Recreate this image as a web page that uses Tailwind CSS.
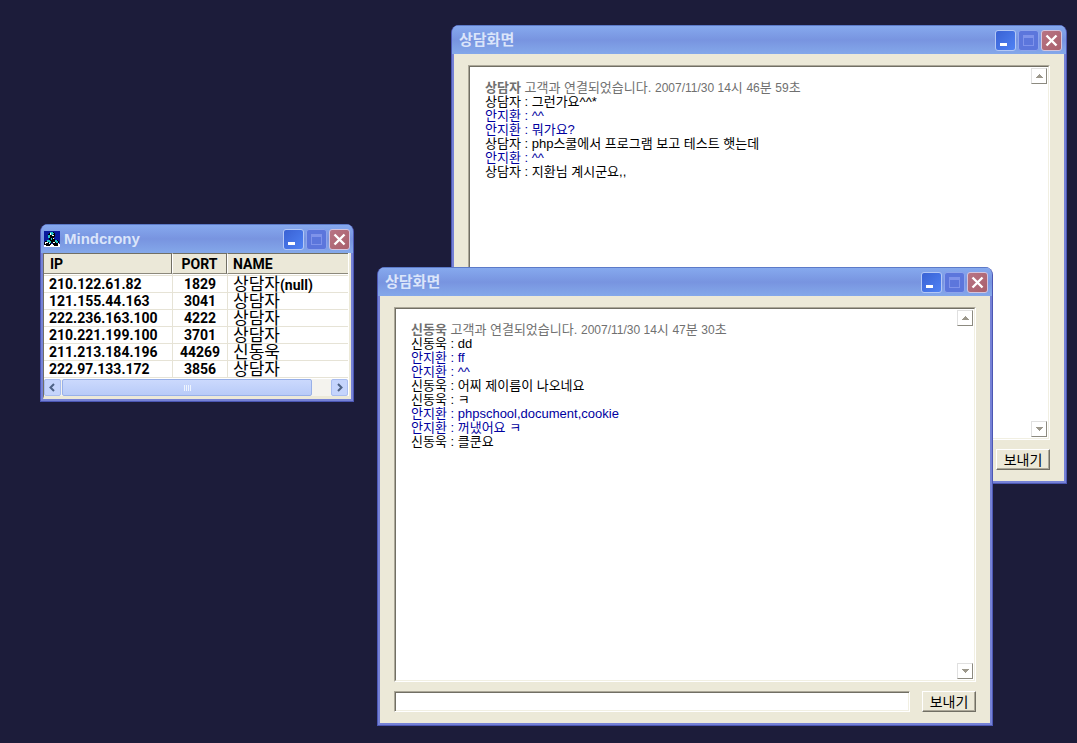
<!DOCTYPE html>
<html lang="ko">
<head>
<meta charset="utf-8">
<title>상담화면</title>
<script src="https://cdn.jsdelivr.net/npm/@tailwindcss/browser@4"></script>
</head>
<body class="relative min-h-screen overflow-hidden bg-[#1c1c3a] font-['Liberation_Sans','Noto_Sans_CJK_KR',sans-serif] text-[13px] text-black">

<svg class="hidden" aria-hidden="true">
  <symbol id="min" viewBox="0 0 19 19"><rect x="4" y="12" width="7" height="3" fill="#fff"/></symbol>
  <symbol id="max" viewBox="0 0 19 19"><path d="M4 4h11v11H4zM5 7v7h9V7z" fill="#7f93ea" fill-rule="evenodd"/></symbol>
  <symbol id="close" viewBox="0 0 19 19"><path d="M4.500 4.500l10 10M14.500 4.500l-10 10" stroke="#fff" stroke-width="2.400" fill="none"/></symbol>
  <symbol id="up" viewBox="0 0 7 4"><path d="M3 0h1v1h1v1h1v1h1v1H0V3h1V2h1V1h1z" fill="#9c988c"/></symbol>
  <symbol id="down" viewBox="0 0 7 4"><path d="M0 0h7v1H6v1H5v1H4v1H3V3H2V2H1V1H0z" fill="#9c988c"/></symbol>
</svg>

<!-- Chat window, back -->
<section class="absolute left-[451px] top-[25px] flex h-[459px] w-[616px] flex-col overflow-hidden rounded-t-lg border-x border-b border-[#4c57b4] bg-[#7682d6]">
  <header class="flex h-[29px] shrink-0 items-center gap-[2px] border-t border-[#5c7ac8] bg-linear-to-b from-[#86a9ee] via-[#7894e0] to-[#84a8ea] pl-[7px] pr-1">
    <h2 class="grow text-[15px] font-bold leading-5 text-[#dbe5fa]">상담화면</h2>
    <button aria-label="최소화" class="size-[21px] rounded-[3px] border border-[#b4c8f6] bg-linear-to-br from-[#3a62d4] to-[#4f82f4]"><svg class="size-[19px]"><use href="#min"/></svg></button>
    <button aria-label="최대화" disabled class="size-[21px] rounded-[3px] border border-[#8da4ec] bg-[#5c76dc]"><svg class="size-[19px]"><use href="#max"/></svg></button>
    <button aria-label="닫기" class="size-[21px] rounded-[3px] border border-[#d3c4dd] bg-linear-to-br from-[#b87484] to-[#a9606c]"><svg class="size-[19px]"><use href="#close"/></svg></button>
  </header>
  <div class="mx-[2px] mb-[2px] flex min-h-0 grow flex-col gap-[9px] bg-[#ece9d8] px-[14px] pb-[11px] pt-[11px]">
    <div class="flex min-h-0 grow border border-b-white border-l-[#aca899] border-r-white border-t-[#aca899]">
      <div class="flex min-w-0 grow border border-b-[#f1efe2] border-l-[#716f64] border-r-[#f1efe2] border-t-[#716f64] bg-white">
        <div class="grow pl-[15px] pt-[14px] leading-[14px] *:h-[14px] *:whitespace-nowrap">
          <p class="text-[#707070]"><b>상담자</b> 고객과 연결되었습니다. <span class="text-xs leading-[14px]">2007/11/30 14</span>시 <span class="text-xs leading-[14px]">46</span>분 <span class="text-xs leading-[14px]">59</span>초</p>
          <p>상담자 : 그런가요^^*</p>
          <p class="text-[#0000a0]">안지환 : ^^</p>
          <p class="text-[#0000a0]">안지환 : 뭐가요?</p>
          <p>상담자 : php스쿨에서 프로그램 보고 테스트 햇는데</p>
          <p class="text-[#0000a0]">안지환 : ^^</p>
          <p>상담자 : 지환님 계시군요,,</p>
        </div>
        <div class="flex flex-col justify-between p-px">
          <button aria-label="위로" class="flex size-4 items-center justify-center border border-b-[#8c8a80] border-l-[#e0e0e0] border-r-[#8c8a80] border-t-[#e0e0e0]"><svg class="h-1 w-[7px]"><use href="#up"/></svg></button>
          <button aria-label="아래로" class="flex size-4 items-center justify-center border border-b-[#8c8a80] border-l-[#e0e0e0] border-r-[#8c8a80] border-t-[#e0e0e0]"><svg class="h-1 w-[7px]"><use href="#down"/></svg></button>
        </div>
      </div>
    </div>
    <form class="flex h-[21px] shrink-0 gap-3">
      <input type="text" aria-label="메시지" class="min-w-0 grow border border-b-white border-l-[#aca899] border-r-white border-t-[#aca899] bg-white px-1 shadow-[inset_1px_1px_0_#716f64,inset_-1px_-1px_0_#f1efe2]">
      <button type="button" class="w-[54px] border border-b-[#716f64] border-l-white border-r-[#716f64] border-t-white bg-[#ece9d8] text-sm leading-[18px] shadow-[inset_-1px_-1px_0_#aca899]">보내기</button>
    </form>
  </div>
</section>

<!-- Connection list -->
<section class="absolute left-[40px] top-[224px] flex h-[178px] w-[314px] flex-col overflow-hidden rounded-t-lg border-x border-b border-[#4c57b4] bg-[#7682d6]">
  <header class="flex h-[29px] shrink-0 items-center gap-[2px] border-t border-[#5c7ac8] bg-linear-to-b from-[#86a9ee] via-[#7894e0] to-[#84a8ea] pl-[3px] pr-[3px]">
    <svg class="size-4 shrink-0" viewBox="0 0 16 16" shape-rendering="crispEdges" aria-hidden="true">
      <path d="M0 0h16v16H0z" fill="#0a1a9c"/>
      <path d="M0 13h1v1h5v-1h3v1h5v-1h2v3H0z" fill="#fff"/>
      <path d="M6 1h4v1h1v4h-1v2h1v1h3v1h1v3h-1v2h-4v-1H9v-2H7v2H6v1H2v-1H0v-3h1v-1h2V9h2V7H4V3h1V2h1z" fill="#000"/>
      <path d="M6 1h3v1h1v1H9v2H8V4H6zM4 4h2v3H4zM3 9h3v1h1v2H5v-1H3zM11 9h2v1h1v2h-2v-1h-1zM7 7h1v2H7z" fill="#22c4c8"/>
      <path d="M6 2h1v2H6zM8 4h2v1H8zM1 11h3v1H2v1H1zM9 11h2v1H9zM9 7h1v1H9zM14 12h1v1h-1zM5 12h1v1H5z" fill="#fff"/>
    </svg>
    <h2 class="grow pl-[2px] text-[15px] font-bold leading-5 text-[#dbe5fa]">Mindcrony</h2>
    <button aria-label="최소화" class="size-[21px] rounded-[3px] border border-[#b4c8f6] bg-linear-to-br from-[#3a62d4] to-[#4f82f4]"><svg class="size-[19px]"><use href="#min"/></svg></button>
    <button aria-label="최대화" disabled class="size-[21px] rounded-[3px] border border-[#8da4ec] bg-[#5c76dc]"><svg class="size-[19px]"><use href="#max"/></svg></button>
    <button aria-label="닫기" class="size-[21px] rounded-[3px] border border-[#d3c4dd] bg-linear-to-br from-[#b87484] to-[#a9606c]"><svg class="size-[19px]"><use href="#close"/></svg></button>
  </header>
  <div class="mx-[2px] mb-[2px] flex min-h-0 grow flex-col border-b-[3px] border-l border-r-2 border-b-[#ece9d8] border-l-[#716f64] border-r-[#ece9d8] bg-white pr-[1px]">
    <table class="w-full table-fixed border-separate border-spacing-0 text-left font-[Roboto,'Noto_Sans_CJK_KR',sans-serif] text-sm font-bold leading-[14px]">
      <colgroup><col class="w-[128px]"><col class="w-[55px]"><col></colgroup>
      <thead>
        <tr class="h-[21px] *:border-b *:border-t *:border-b-[#8c897c] *:border-t-[#716f64] *:bg-[#ebe8d8] *:p-0">
          <th class="border-r border-r-[#716f64] pl-0"><span class="pl-[6px]">IP</span></th>
          <th class="border-l border-r border-l-white border-r-[#716f64] text-center">PORT</th>
          <th class="border-l border-l-white"><span class="pl-[5px]">NAME</span></th>
        </tr>
      </thead>
      <tbody class="*:h-[17px] [&_td]:border-b [&_td]:border-[#e6e3d6] [&_td]:p-0 [&_td+td]:border-l">
        <tr class="h-[2px]! leading-[1px]"><td></td><td></td><td></td></tr>
        <tr><td><span class="pl-[5px]">210.122.61.82</span></td><td class="text-center">1829</td><td><span class="pl-[5px] text-[17px] font-normal leading-[14px]">상담자</span>(null)</td></tr>
        <tr><td><span class="pl-[5px]">121.155.44.163</span></td><td class="text-center">3041</td><td><span class="pl-[5px] text-[17px] font-normal leading-[14px]">상담자</span></td></tr>
        <tr><td><span class="pl-[5px]">222.236.163.100</span></td><td class="text-center">4222</td><td><span class="pl-[5px] text-[17px] font-normal leading-[14px]">상담자</span></td></tr>
        <tr><td><span class="pl-[5px]">210.221.199.100</span></td><td class="text-center">3701</td><td><span class="pl-[5px] text-[17px] font-normal leading-[14px]">상담자</span></td></tr>
        <tr><td><span class="pl-[5px]">211.213.184.196</span></td><td class="text-center">44269</td><td><span class="pl-[5px] text-[17px] font-normal leading-[14px]">신동욱</span></td></tr>
        <tr><td><span class="pl-[5px]">222.97.133.172</span></td><td class="text-center">3856</td><td><span class="pl-[5px] text-[17px] font-normal leading-[14px]">상담자</span></td></tr>
      </tbody>
    </table>
    <div class="mt-auto flex h-[17px] shrink-0 gap-[1px] bg-[#f4f3ee]">
      <button aria-label="왼쪽" class="flex w-[17px] items-center justify-center rounded-[2px] border border-[#a9bdf0] bg-[#c5d4fc]"><svg class="size-[9px]" viewBox="0 0 9 9"><path d="M6 1L2.500 4.500 6 8" stroke="#4d6185" stroke-width="2" fill="none"/></svg></button>
      <div class="flex w-[250px] items-center justify-center gap-[1px] rounded-[2px] border border-[#98b0e8] bg-linear-to-b from-[#cbd9fd] to-[#b8cbf8] *:h-[6px] *:w-px *:bg-[#eef4fe]"><i></i><i></i><i></i><i></i></div>
      <div class="grow"></div>
      <button aria-label="오른쪽" class="flex w-[17px] items-center justify-center rounded-[2px] border border-[#a9bdf0] bg-[#c5d4fc]"><svg class="size-[9px]" viewBox="0 0 9 9"><path d="M3 1l3.500 3.500L3 8" stroke="#4d6185" stroke-width="2" fill="none"/></svg></button>
    </div>
  </div>
</section>

<!-- Chat window, front -->
<section class="absolute left-[377px] top-[267px] flex h-[459px] w-[616px] flex-col overflow-hidden rounded-t-lg border-x border-b border-[#4c57b4] bg-[#7682d6]">
  <header class="flex h-[29px] shrink-0 items-center gap-[2px] border-t border-[#5c7ac8] bg-linear-to-b from-[#86a9ee] via-[#7894e0] to-[#84a8ea] pl-[7px] pr-1">
    <h2 class="grow text-[15px] font-bold leading-5 text-[#dbe5fa]">상담화면</h2>
    <button aria-label="최소화" class="size-[21px] rounded-[3px] border border-[#b4c8f6] bg-linear-to-br from-[#3a62d4] to-[#4f82f4]"><svg class="size-[19px]"><use href="#min"/></svg></button>
    <button aria-label="최대화" disabled class="size-[21px] rounded-[3px] border border-[#8da4ec] bg-[#5c76dc]"><svg class="size-[19px]"><use href="#max"/></svg></button>
    <button aria-label="닫기" class="size-[21px] rounded-[3px] border border-[#d3c4dd] bg-linear-to-br from-[#b87484] to-[#a9606c]"><svg class="size-[19px]"><use href="#close"/></svg></button>
  </header>
  <div class="mx-[2px] mb-[2px] flex min-h-0 grow flex-col gap-[9px] bg-[#ece9d8] px-[14px] pb-[11px] pt-[11px]">
    <div class="flex min-h-0 grow border border-b-white border-l-[#aca899] border-r-white border-t-[#aca899]">
      <div class="flex min-w-0 grow border border-b-[#f1efe2] border-l-[#716f64] border-r-[#f1efe2] border-t-[#716f64] bg-white">
        <div class="grow pl-[15px] pt-[14px] leading-[14px] *:h-[14px] *:whitespace-nowrap">
          <p class="text-[#707070]"><b>신동욱</b> 고객과 연결되었습니다. <span class="text-xs leading-[14px]">2007/11/30 14</span>시 <span class="text-xs leading-[14px]">47</span>분 <span class="text-xs leading-[14px]">30</span>초</p>
          <p>신동욱 : dd</p>
          <p class="text-[#0000a0]">안지환 : ff</p>
          <p class="text-[#0000a0]">안지환 : ^^</p>
          <p>신동욱 : 어찌 제이름이 나오네요</p>
          <p>신동욱 : ㅋ</p>
          <p class="text-[#0000a0]">안지환 : phpschool,document,cookie</p>
          <p class="text-[#0000a0]">안지환 : 꺼냈어요 ㅋ</p>
          <p>신동욱 : 클쿤요</p>
        </div>
        <div class="flex flex-col justify-between p-px">
          <button aria-label="위로" class="flex size-4 items-center justify-center border border-b-[#8c8a80] border-l-[#e0e0e0] border-r-[#8c8a80] border-t-[#e0e0e0]"><svg class="h-1 w-[7px]"><use href="#up"/></svg></button>
          <button aria-label="아래로" class="flex size-4 items-center justify-center border border-b-[#8c8a80] border-l-[#e0e0e0] border-r-[#8c8a80] border-t-[#e0e0e0]"><svg class="h-1 w-[7px]"><use href="#down"/></svg></button>
        </div>
      </div>
    </div>
    <form class="flex h-[21px] shrink-0 gap-3">
      <input type="text" aria-label="메시지" class="min-w-0 grow border border-b-white border-l-[#aca899] border-r-white border-t-[#aca899] bg-white px-1 shadow-[inset_1px_1px_0_#716f64,inset_-1px_-1px_0_#f1efe2]">
      <button type="button" class="w-[54px] border border-b-[#716f64] border-l-white border-r-[#716f64] border-t-white bg-[#ece9d8] text-sm leading-[18px] shadow-[inset_-1px_-1px_0_#aca899]">보내기</button>
    </form>
  </div>
</section>
</body>
</html>
